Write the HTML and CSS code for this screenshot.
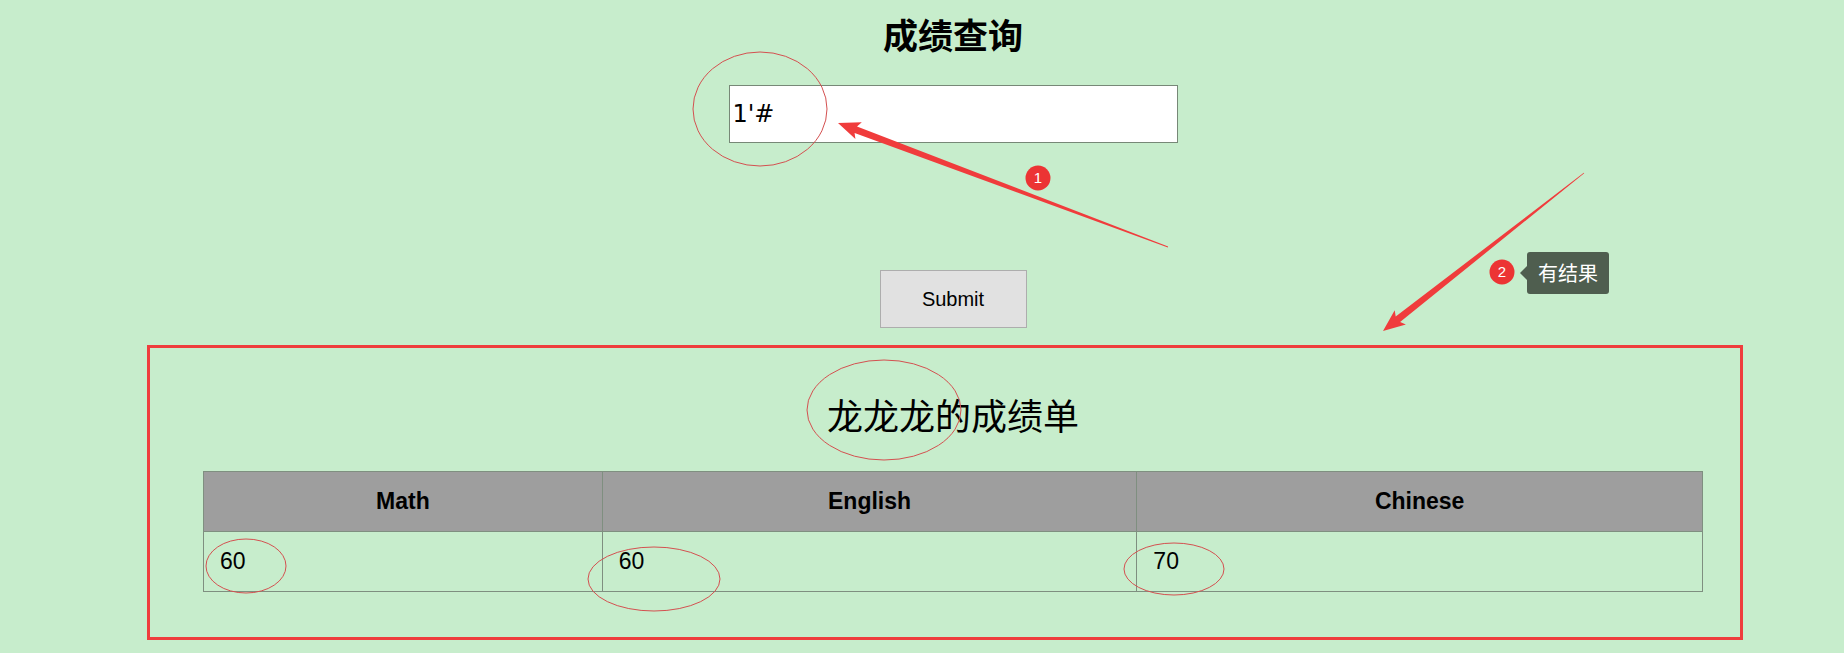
FILE: index.html
```html
<!DOCTYPE html>
<html lang="zh-CN">
  <head>
    <meta charset="UTF-8" />
    <meta name="viewport" content="width=device-width, initial-scale=1.0" />
    <title>成绩查询</title>
    <link rel="stylesheet" href="styles.css">
  </head>
  <body>
    <div class="page">
      <h1 class="title">成绩查询</h1>
      <form class="query" id="query-form">
        <input type="text" class="query-input" value="1'#" />
        <button type="submit" class="btn">Submit</button>
      </form>

      <div class="result">
        <h2 class="result-title">龙龙龙的成绩单</h2>
        <table class="scores">
          <colgroup>
            <col class="col-math" />
            <col class="col-english" />
            <col class="col-chinese" />
          </colgroup>
          <thead>
            <tr>
              <th>Math</th>
              <th>English</th>
              <th>Chinese</th>
            </tr>
          </thead>
          <tbody>
            <tr>
              <td>60</td>
              <td>60</td>
              <td>70</td>
            </tr>
          </tbody>
        </table>
      </div>
    </div>

    <!-- annotation layer -->
    <svg class="marks" width="1844" height="653" viewBox="0 0 1844 653">
      <rect class="mark-box" x="148.5" y="346.5" width="1593" height="292" />
      <ellipse class="mark-ring" cx="760" cy="109" rx="67" ry="57" />
      <ellipse class="mark-ring" cx="884" cy="410" rx="77" ry="50" />
      <ellipse class="mark-ring" cx="246" cy="566" rx="40" ry="27" />
      <ellipse class="mark-ring" cx="654" cy="579" rx="66" ry="32" />
      <ellipse class="mark-ring" cx="1174" cy="569" rx="50" ry="26" />
      <polygon class="mark-arrow" points="838,123 855.4,139.1 854.6,133 1167.9,247.4 1168.1,246.6 857,126.4 861.8,122.3" />
      <polygon class="mark-arrow" points="1383,331 1405.9,324.5 1400.1,322.1 1584.2,173.3 1583.8,172.7 1395.7,316.6 1394.7,310.3" />
      <circle class="mark-dot" cx="1038" cy="178" r="12.5" />
      <text class="mark-num" x="1038" y="183">1</text>
      <circle class="mark-dot" cx="1502" cy="272" r="12.5" />
      <text class="mark-num" x="1502" y="277">2</text>
    </svg>
    <div class="tip">有结果</div>

    <script>
      document.getElementById("query-form").addEventListener("submit", function (e) {
        e.preventDefault();
      });
    </script>
  </body>
</html>
```

FILE: styles.css
```css
html {
  background-color: #c7edcc;
}
body {
  margin: 0;
  padding: 0;
  min-height: 653px;
  font-family: "Liberation Sans", Arial, "Noto Sans CJK SC", sans-serif;
  color: #000;
  position: relative;
}
.page {
  padding-left: 62px;
  display: flex;
  flex-direction: column;
  align-items: center;
}
.title {
  margin: 14px 0 0;
  font-size: 35px;
  line-height: 40px;
  font-weight: bold;
  font-family: "Noto Sans CJK SC", sans-serif;
}
.query {
  display: flex;
  flex-direction: column;
  align-items: center;
}
.query-input {
  margin-top: 31px;
  width: 449px;
  height: 58px;
  box-sizing: border-box;
  padding: 0 3px;
  border: 1px solid #778877;
  background-color: #fff;
  font-family: "DejaVu Sans", sans-serif;
  font-size: 24px;
  color: #000;
  outline: none;
}
.btn {
  margin-top: 127px;
  width: 147px;
  height: 58px;
  box-sizing: border-box;
  background-color: #e1e1e1;
  border: 1px solid #adadad;
  font-family: "Liberation Sans", Arial, sans-serif;
  font-size: 20px;
  color: #000;
  cursor: pointer;
}
.result {
  display: flex;
  flex-direction: column;
  align-items: center;
}
.result-title {
  margin: 64px 0 35px;
  font-size: 36px;
  line-height: 44px;
  font-weight: normal;
  font-family: "Noto Sans CJK SC", sans-serif;
}
.scores {
  width: 1500px;
  border-collapse: collapse;
  font-size: 23px;
}
.col-math {
  width: 399px;
}
.col-english {
  width: 535px;
}
.col-chinese {
  width: 566px;
}
.scores th,
.scores td {
  border: 1px solid #7f8f80;
  height: 59px;
  padding: 0 16px;
}
.scores th {
  background-color: #9e9e9e;
  font-weight: bold;
  text-align: center;
}
.scores td {
  text-align: left;
}
.marks {
  position: absolute;
  top: 0;
  left: 0;
  pointer-events: none;
}
.mark-box {
  fill: none;
  stroke: #ef3d3d;
  stroke-width: 3;
}
.mark-ring {
  fill: none;
  stroke: #d45050;
  stroke-width: 1;
}
.mark-arrow {
  fill: #f03c3c;
}
.mark-dot {
  fill: #ec3434;
}
.mark-num {
  fill: #fff;
  font-family: "Liberation Sans", Arial, sans-serif;
  font-size: 15px;
  text-anchor: middle;
}
.tip {
  position: absolute;
  left: 1527px;
  top: 252px;
  width: 82px;
  height: 42px;
  box-sizing: border-box;
  background-color: #4f5e4f;
  border-radius: 3px;
  color: #fff;
  font-family: "Noto Sans CJK SC", sans-serif;
  font-size: 20px;
  line-height: 42px;
  text-align: center;
}
.tip::before {
  content: "";
  position: absolute;
  left: -7px;
  top: 14px;
  border-top: 7px solid transparent;
  border-bottom: 7px solid transparent;
  border-right: 7px solid #4f5e4f;
}
```
